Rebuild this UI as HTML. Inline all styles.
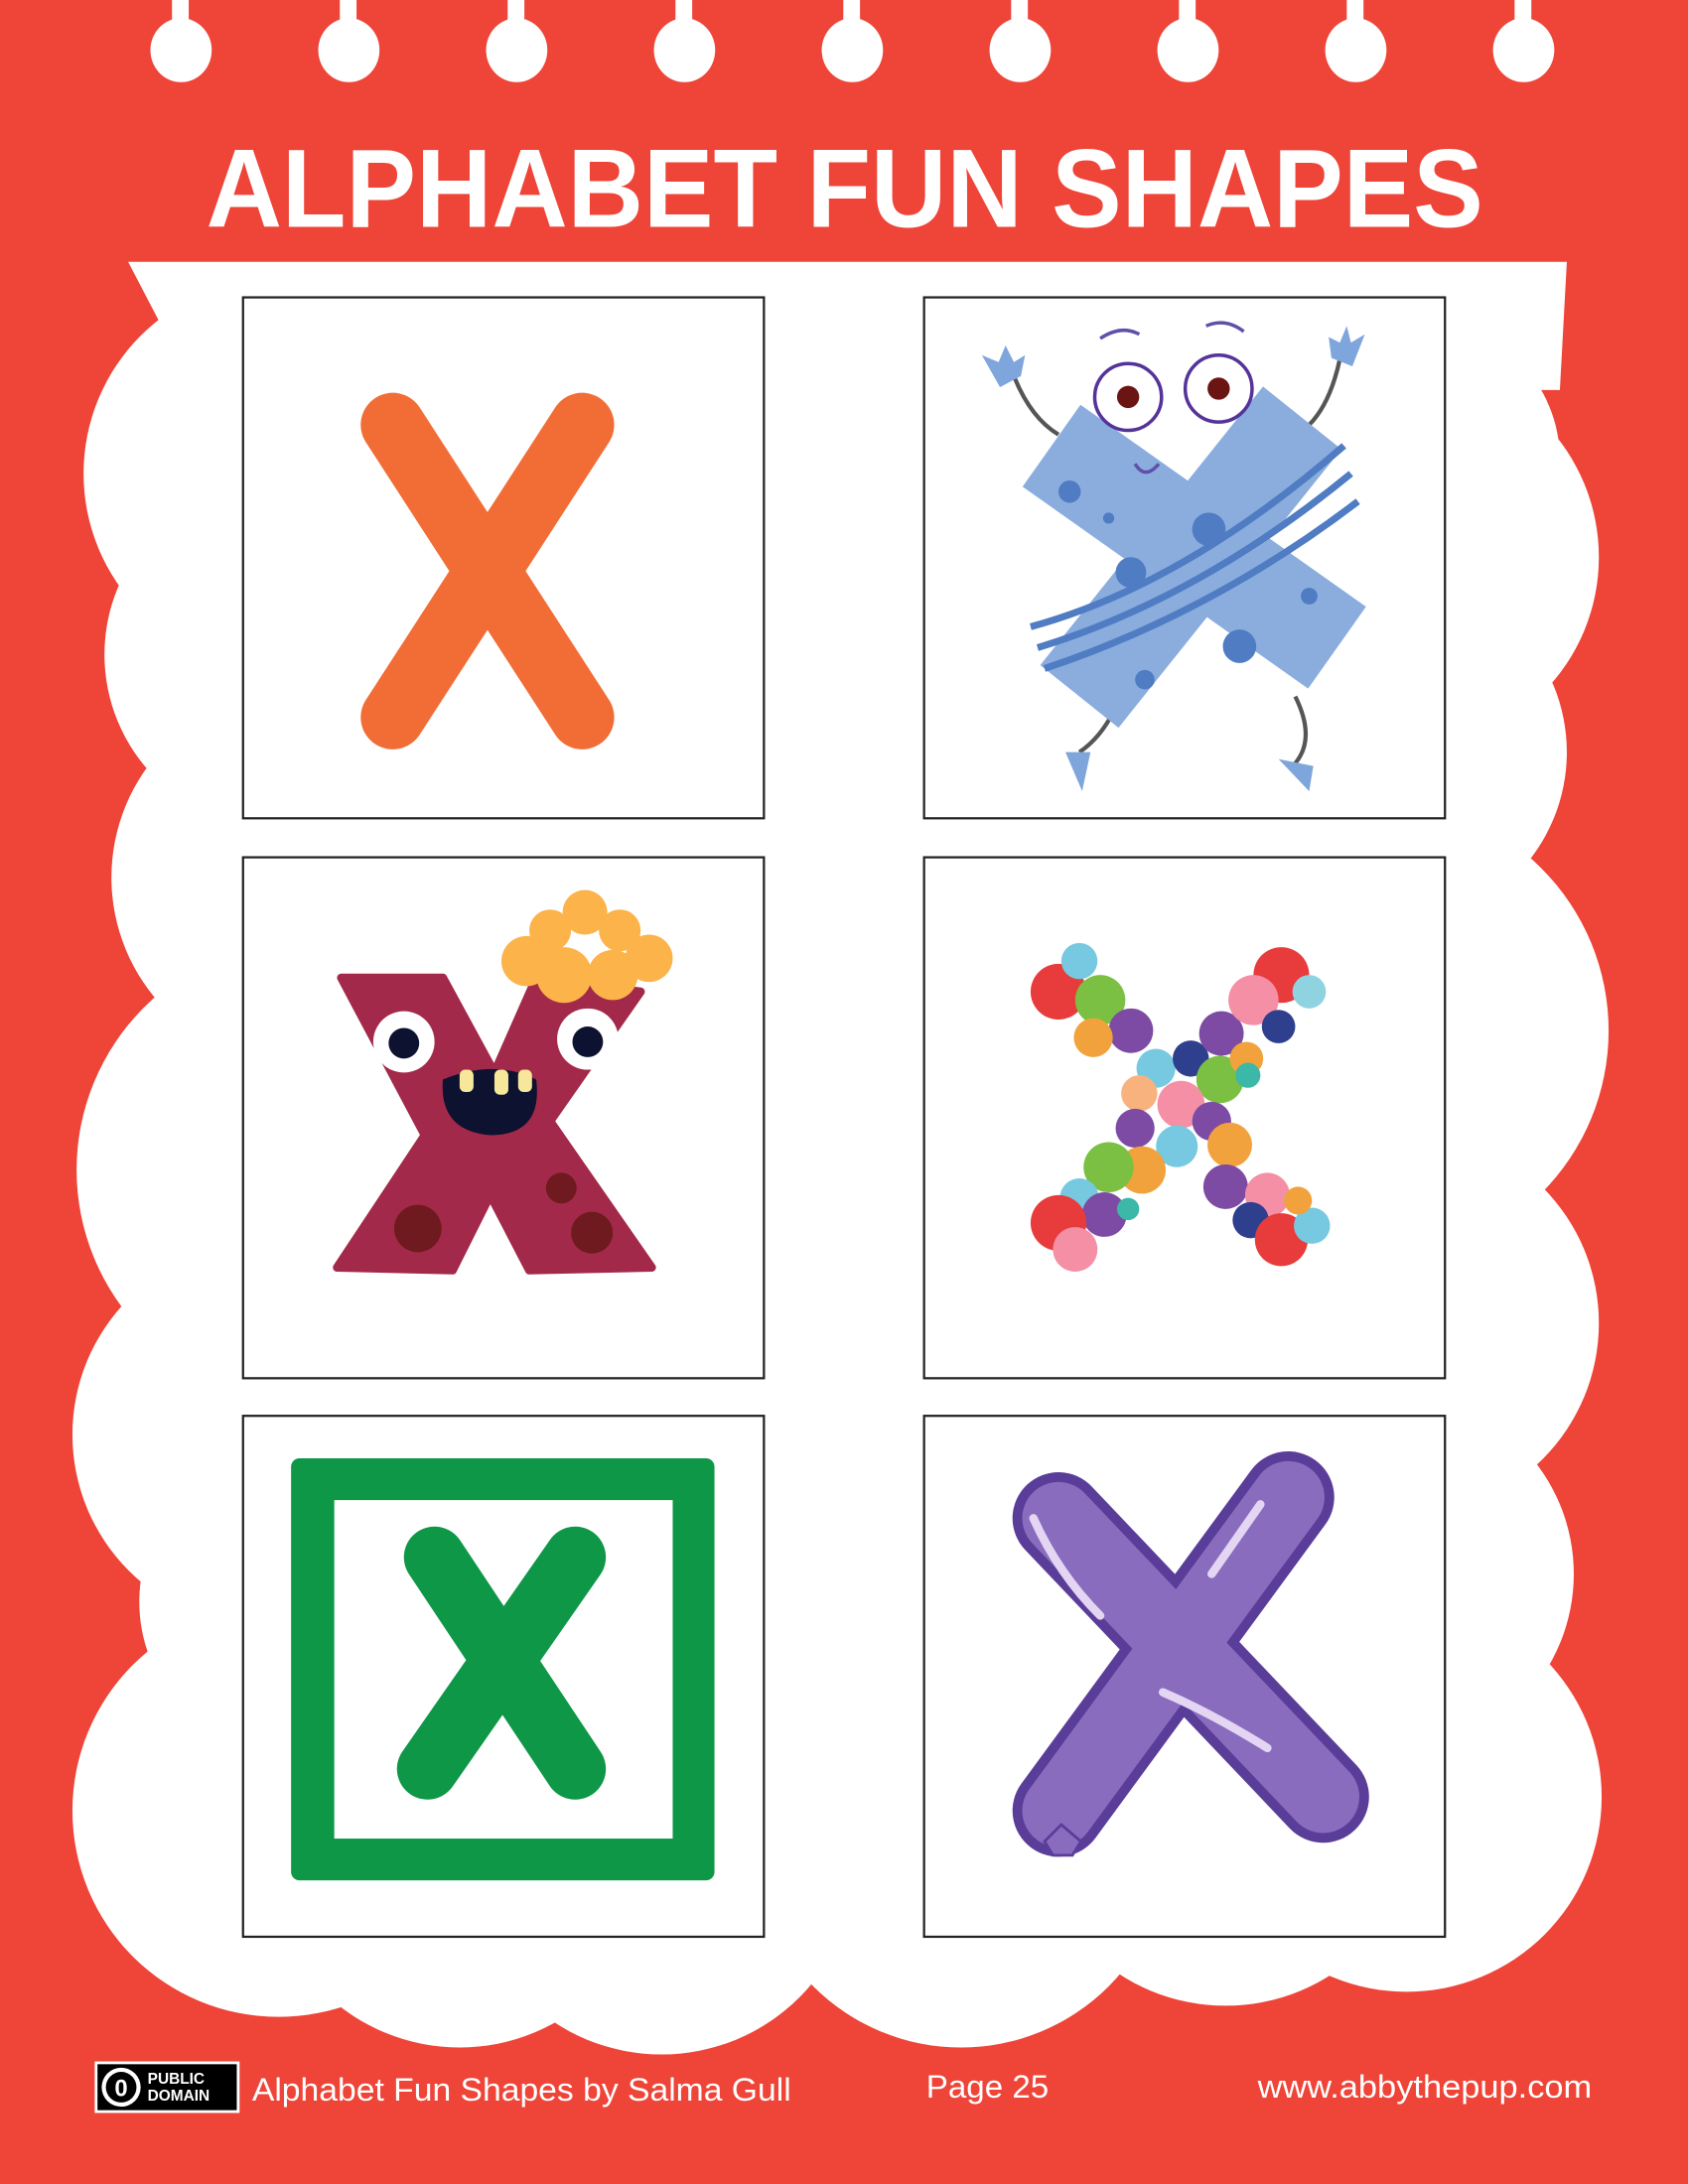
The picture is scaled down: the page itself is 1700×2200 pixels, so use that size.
<!DOCTYPE html>
<html><head><meta charset="utf-8"><style>
html,body{margin:0;padding:0;background:#ef4438;}
svg{display:block}
</style></head><body>
<svg width="1700" height="2200" viewBox="0 0 1212 1568" preserveAspectRatio="none" xmlns="http://www.w3.org/2000/svg">
<rect width="1212" height="1568" fill="#ef4438"/>
<!-- binder holes -->
<g fill="#fff">
<g id="h"><rect x="123.5" y="0" width="12" height="22"/><ellipse cx="130" cy="36" rx="22" ry="23"/></g>
<use href="#h" x="120.5"/><use href="#h" x="241"/><use href="#h" x="361.5"/><use href="#h" x="482"/><use href="#h" x="602.5"/><use href="#h" x="723"/><use href="#h" x="843.5"/><use href="#h" x="964"/>
</g>
<!-- title -->
<text x="148" y="163" fill="#fff" font-family="Liberation Sans, sans-serif" font-weight="bold" font-size="80" textLength="917" lengthAdjust="spacingAndGlyphs">ALPHABET FUN SHAPES</text>
<!-- cloud -->
<g fill="#fff">
<path d="M92 188 L1125 188 L1120 280 L140 280 Z"/>
<rect x="140" y="200" width="940" height="1200"/>
<circle cx="200" cy="340" r="140"/>
<circle cx="200" cy="470" r="125"/>
<circle cx="215" cy="630" r="135"/>
<circle cx="220" cy="840" r="165"/>
<circle cx="190" cy="1030" r="138"/>
<circle cx="210" cy="1150" r="110"/>
<circle cx="200" cy="1300" r="148"/>
<circle cx="330" cy="1330" r="140"/>
<circle cx="475" cy="1335" r="140"/>
<circle cx="690" cy="1320" r="150"/>
<circle cx="880" cy="1300" r="140"/>
<circle cx="1010" cy="1290" r="140"/>
<circle cx="1020" cy="330" r="100"/>
<circle cx="1010" cy="400" r="138"/>
<circle cx="1000" cy="540" r="125"/>
<circle cx="990" cy="740" r="165"/>
<circle cx="1010" cy="950" r="138"/>
<circle cx="1000" cy="1130" r="130"/>
</g>
<!-- cards -->
<g fill="#fff" stroke="#222" stroke-width="1.6">
<rect x="174.5" y="213.5" width="374" height="374"/>
<rect x="663.5" y="213.5" width="374" height="374"/>
<rect x="174.5" y="615.5" width="374" height="374"/>
<rect x="663.5" y="615.5" width="374" height="374"/>
<rect x="174.5" y="1016.5" width="374" height="374"/>
<rect x="663.5" y="1016.5" width="374" height="374"/>
</g>
<!-- card1 orange X -->
<g stroke="#f26d35" stroke-width="46" stroke-linecap="round">
<line x1="282" y1="305" x2="418" y2="515"/><line x1="418" y1="305" x2="282" y2="515"/>
</g>
<!-- card2 blue monster X -->
<g stroke="#555" stroke-width="3" fill="none">
<path d="M728 270 Q740 300 760 312"/><path d="M962 258 Q955 290 940 305"/>
<path d="M800 510 Q790 530 775 540"/><path d="M930 500 Q945 530 930 548"/>
</g>
<g fill="#7fa6dc"><path d="M705 255 l12 5 l5 -12 l6 12 l8 -5 l-3 15 l-15 8z"/><path d="M980 240 l-10 6 l-3 -12 l-5 12 l-8 -4 l2 15 l15 6z"/>
<path d="M765 540 l18 0 l-6 28 z"/><path d="M918 545 l25 5 l-3 18 z"/></g>
<g stroke="#8aadde" stroke-width="72" stroke-linecap="butt">
<line x1="755" y1="320" x2="960" y2="465"/><line x1="935" y1="300" x2="775" y2="500"/>
</g>
<g stroke="#4f7cc2" stroke-width="5" fill="none"><path d="M740 450 Q850 420 965 320"/><path d="M745 465 Q860 430 970 340"/><path d="M750 480 Q870 440 975 360"/></g>
<g fill="#4f7cc2"><circle cx="768" cy="353" r="8"/><circle cx="868" cy="380" r="12"/><circle cx="812" cy="411" r="11"/><circle cx="890" cy="464" r="12"/><circle cx="822" cy="488" r="7"/><circle cx="940" cy="428" r="6"/><circle cx="796" cy="372" r="4"/></g>
<g stroke="#553399" stroke-width="2.5" fill="#fff"><circle cx="810" cy="285" r="24"/><circle cx="875" cy="279" r="24"/></g>
<g fill="#6b1414"><circle cx="810" cy="285" r="8"/><circle cx="875" cy="279" r="8"/></g>
<g stroke="#6050aa" stroke-width="2.5" fill="none"><path d="M790 243 Q805 233 818 240"/><path d="M866 234 Q880 228 893 238"/><path d="M815 333 Q822 345 832 333"/></g>
<!-- card3 maroon monster -->
<path d="M245 702 L318 702 L355 770 L385 702 L460 712 L395 805 L468 910 L380 912 L352 858 L325 912 L242 910 L305 815 Z" fill="#a3294a" stroke="#a3294a" stroke-width="6" stroke-linejoin="round"/>
<g fill="#fbb34a"><circle cx="378" cy="690" r="18"/><circle cx="395" cy="668" r="15"/><circle cx="420" cy="655" r="16"/><circle cx="445" cy="668" r="15"/><circle cx="466" cy="688" r="17"/><circle cx="440" cy="700" r="18"/><circle cx="405" cy="700" r="20"/></g>
<g fill="#fff"><circle cx="290" cy="748" r="22"/><circle cx="422" cy="746" r="22"/></g>
<g fill="#0c1230"><circle cx="290" cy="749" r="11"/><circle cx="422" cy="748" r="11"/><path d="M318 775 Q355 760 385 775 Q390 815 352 815 Q315 812 318 775z"/></g>
<g fill="#f6e79a"><rect x="330" y="768" width="10" height="16" rx="4"/><rect x="355" y="768" width="10" height="18" rx="4"/><rect x="372" y="768" width="10" height="16" rx="4"/></g>
<g fill="#6e1a1e"><circle cx="300" cy="882" r="17"/><circle cx="425" cy="885" r="15"/><circle cx="403" cy="853" r="11"/></g>
<!-- card4 bubbles -->
<g>
<circle cx="760" cy="712" r="20" fill="#e83b3b"/><circle cx="790" cy="718" r="18" fill="#7cc043"/><circle cx="775" cy="690" r="13" fill="#76c9e0"/><circle cx="812" cy="740" r="16" fill="#7d4ba4"/><circle cx="785" cy="745" r="14" fill="#f2a23c"/><circle cx="830" cy="767" r="14" fill="#76c9e0"/><circle cx="855" cy="760" r="13" fill="#2e3f8e"/><circle cx="876" cy="775" r="17" fill="#7cc043"/><circle cx="877" cy="742" r="16" fill="#7d4ba4"/><circle cx="920" cy="700" r="20" fill="#e83b3b"/><circle cx="900" cy="718" r="18" fill="#f48fa5"/><circle cx="940" cy="712" r="12" fill="#8fd3e0"/><circle cx="918" cy="737" r="12" fill="#2e3f8e"/><circle cx="895" cy="760" r="12" fill="#f2a23c"/><circle cx="818" cy="785" r="13" fill="#f8b27e"/><circle cx="848" cy="793" r="17" fill="#f48fa5"/><circle cx="870" cy="805" r="14" fill="#7d4ba4"/><circle cx="815" cy="810" r="14" fill="#7d4ba4"/><circle cx="845" cy="823" r="15" fill="#76c9e0"/><circle cx="883" cy="822" r="16" fill="#f2a23c"/><circle cx="820" cy="840" r="17" fill="#f2a23c"/><circle cx="796" cy="838" r="18" fill="#7cc043"/><circle cx="880" cy="852" r="16" fill="#7d4ba4"/><circle cx="910" cy="858" r="16" fill="#f48fa5"/><circle cx="775" cy="860" r="14" fill="#76c9e0"/><circle cx="793" cy="872" r="16" fill="#7d4ba4"/><circle cx="760" cy="878" r="20" fill="#e83b3b"/><circle cx="772" cy="897" r="16" fill="#f48fa5"/><circle cx="898" cy="876" r="13" fill="#2e3f8e"/><circle cx="920" cy="890" r="19" fill="#e83b3b"/><circle cx="942" cy="880" r="13" fill="#76c9e0"/><circle cx="932" cy="862" r="10" fill="#f2a23c"/><circle cx="810" cy="868" r="8" fill="#3bb8a8"/><circle cx="896" cy="772" r="9" fill="#3bb8a8"/>
</g>
<!-- card5 green box -->
<rect x="209" y="1047" width="304" height="303" rx="6" fill="#0e9747"/>
<rect x="240" y="1077" width="243" height="243" fill="#fff"/>
<g stroke="#0e9747" stroke-width="44" stroke-linecap="round"><line x1="312" y1="1118" x2="413" y2="1270"/><line x1="413" y1="1118" x2="307" y2="1270"/></g>
<!-- card6 purple balloon -->
<g stroke="#5a3d99" stroke-width="66" stroke-linecap="round"><line x1="760" y1="1090" x2="950" y2="1290"/><line x1="925" y1="1075" x2="760" y2="1300"/></g>
<g stroke="#8a6cbf" stroke-width="52" stroke-linecap="round"><line x1="760" y1="1090" x2="950" y2="1290"/><line x1="925" y1="1075" x2="760" y2="1300"/></g>
<g stroke="#e4d6f3" stroke-width="6" stroke-linecap="round" fill="none"><path d="M742 1090 Q760 1130 790 1160"/><path d="M905 1080 L870 1130"/><path d="M835 1215 Q870 1230 910 1255"/></g>
<path d="M750 1322 l12 -12 l14 12 l-6 10 l-14 0z" fill="#8a6cbf" stroke="#5a3d99" stroke-width="2"/>
<!-- footer -->
<rect x="68" y="1480" width="104" height="37" fill="#fff"/>
<rect x="70" y="1482" width="100" height="33" fill="#000"/>
<circle cx="87" cy="1498.5" r="14" fill="#fff"/><circle cx="87" cy="1498.5" r="11" fill="#000"/>
<text x="87" y="1505" fill="#fff" font-family="Liberation Sans, sans-serif" font-weight="bold" font-size="17" text-anchor="middle">0</text>
<text x="106" y="1496" fill="#fff" font-family="Liberation Sans, sans-serif" font-weight="bold" font-size="11">PUBLIC</text>
<text x="106" y="1508" fill="#fff" font-family="Liberation Sans, sans-serif" font-weight="bold" font-size="11">DOMAIN</text>
<g fill="#fff" font-family="Liberation Sans, DejaVu Sans, sans-serif" font-size="23">
<text x="181" y="1508" textLength="387" lengthAdjust="spacingAndGlyphs">Alphabet Fun Shapes by Salma Gull</text>
<text x="665" y="1506" textLength="88" lengthAdjust="spacingAndGlyphs">Page 25</text>
<text x="903" y="1506" textLength="240" lengthAdjust="spacingAndGlyphs">www.abbythepup.com</text>
</g>
</svg>
</body></html>
